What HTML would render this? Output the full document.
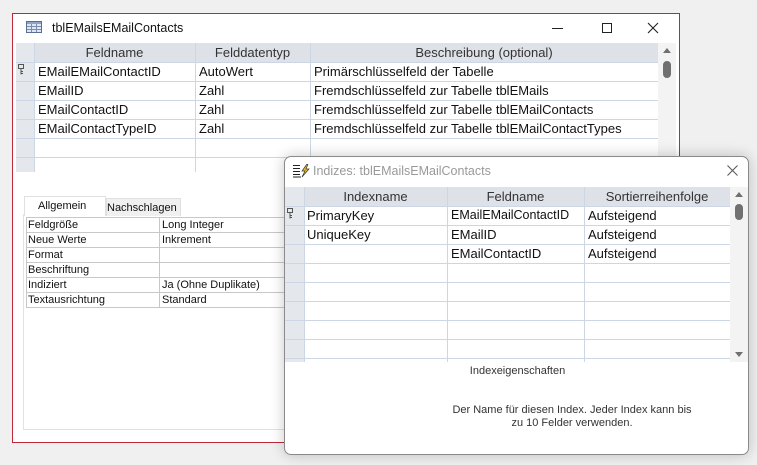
<!DOCTYPE html><html><head><meta charset="utf-8"><style>
*{margin:0;padding:0;box-sizing:border-box}
body{width:757px;height:465px;background:#f0f0f0;position:relative;overflow:hidden;font-family:"Liberation Sans",sans-serif;color:#111}
.a{position:absolute}
.t{position:absolute;white-space:nowrap;font-size:13px;line-height:19px}
.hl{position:absolute;height:1px;background:#cdd6e4}
.vl{position:absolute;width:1px;background:#cdd6e4}
.s{position:absolute;white-space:nowrap;font-size:11px;line-height:15px}
</style></head><body>
<div class="a" style="left:12px;top:13px;width:668px;height:430px;background:#fff;border:1px solid #c0283a"></div>
<svg class="a" style="left:26px;top:21px" width="16" height="12"><rect x="0.5" y="0.5" width="15" height="11" fill="#dfe6f2" stroke="#5a6e94"/><rect x="1" y="1" width="14" height="2" fill="#8ea3c8"/><path d="M1 5.5H15M1 8.5H15M5.5 3V11M10.5 3V11" stroke="#7a8cb0"/></svg>
<div class="t" style="left:52px;top:19px;font-size:12.5px">tblEMailsEMailContacts</div>
<div class="a" style="left:552px;top:28px;width:11px;height:1px;background:#222"></div>
<div class="a" style="left:602px;top:23px;width:10px;height:10px;border:1px solid #222"></div>
<svg class="a" style="left:647px;top:22px" width="12" height="12"><path d="M1 1L11 11M11 1L1 11" stroke="#222" stroke-width="1.1"/></svg>
<div class="a" style="left:16px;top:43px;width:642px;height:19px;background:#dee2e8"></div>
<div class="a" style="left:16px;top:43px;width:18px;height:129px;background:#e4e7ec"></div>
<div class="a" style="left:658px;top:43px;width:18px;height:129px;background:#f3f3f3"></div>
<div class="a" style="left:663px;top:48px;width:0;height:0;border-left:4px solid transparent;border-right:4px solid transparent;border-bottom:5px solid #707070"></div>
<div class="a" style="left:663px;top:61px;width:8px;height:17px;border-radius:4px;background:#707070"></div>
<div class="hl" style="left:16px;top:62px;width:642px"></div>
<div class="hl" style="left:16px;top:81px;width:642px"></div>
<div class="hl" style="left:16px;top:100px;width:642px"></div>
<div class="hl" style="left:16px;top:119px;width:642px"></div>
<div class="hl" style="left:16px;top:138px;width:642px"></div>
<div class="hl" style="left:16px;top:157px;width:642px"></div>
<div class="vl" style="left:34px;top:43px;height:129px"></div>
<div class="vl" style="left:195px;top:43px;height:129px"></div>
<div class="vl" style="left:310px;top:43px;height:129px"></div>
<div class="t" style="left:34px;top:43px;width:161px;text-align:center;color:#333">Feldname</div>
<div class="t" style="left:195px;top:43px;width:115px;text-align:center;color:#333">Felddatentyp</div>
<div class="t" style="left:310px;top:43px;width:348px;text-align:center;color:#333">Beschreibung (optional)</div>
<svg class="a" style="left:18px;top:64px" width="6" height="11"><rect x="0.5" y="0.5" width="5" height="4" fill="none" stroke="#555"/><path d="M3 4.5V10.5M3 7.5H5M3 9.5H5" stroke="#555"/></svg>
<div class="t" style="left:38px;top:62px">EMailEMailContactID</div><div class="t" style="left:199px;top:62px">AutoWert</div><div class="t" style="left:314px;top:62px">Primärschlüsselfeld der Tabelle</div>
<div class="t" style="left:38px;top:81px">EMailID</div><div class="t" style="left:199px;top:81px">Zahl</div><div class="t" style="left:314px;top:81px">Fremdschlüsselfeld zur Tabelle tblEMails</div>
<div class="t" style="left:38px;top:100px">EMailContactID</div><div class="t" style="left:199px;top:100px">Zahl</div><div class="t" style="left:314px;top:100px">Fremdschlüsselfeld zur Tabelle tblEMailContacts</div>
<div class="t" style="left:38px;top:119px">EMailContactTypeID</div><div class="t" style="left:199px;top:119px">Zahl</div><div class="t" style="left:314px;top:119px">Fremdschlüsselfeld zur Tabelle tblEMailContactTypes</div>
<div class="a" style="left:23px;top:214px;width:300px;height:216px;border:1px solid #e2e2e2;border-top:none"></div>
<div class="a" style="left:24px;top:196px;width:82px;height:20px;background:#fff;border:1px solid #e0e0e0;border-bottom:none"></div>
<div class="a" style="left:106px;top:198px;width:75px;height:18px;background:#f0f0f0;border:1px solid #e0e0e0;border-bottom:none"></div>
<div class="s" style="left:38px;top:199px">Allgemein</div>
<div class="s" style="left:107px;top:201px">Nachschlagen</div>
<div class="a" style="left:26px;top:217px;width:270px;height:91px;border:1px solid #c8c8c8;border-right:none"></div>
<div class="a" style="left:159px;top:217px;width:1px;height:91px;background:#c8c8c8"></div>
<div class="a" style="left:26px;top:232px;width:270px;height:1px;background:#c8c8c8"></div>
<div class="a" style="left:26px;top:247px;width:270px;height:1px;background:#c8c8c8"></div>
<div class="a" style="left:26px;top:262px;width:270px;height:1px;background:#c8c8c8"></div>
<div class="a" style="left:26px;top:277px;width:270px;height:1px;background:#c8c8c8"></div>
<div class="a" style="left:26px;top:292px;width:270px;height:1px;background:#c8c8c8"></div>
<div class="s" style="left:28px;top:218px">Feldgröße</div><div class="s" style="left:162px;top:218px">Long Integer</div>
<div class="s" style="left:28px;top:233px">Neue Werte</div><div class="s" style="left:162px;top:233px">Inkrement</div>
<div class="s" style="left:28px;top:248px">Format</div>
<div class="s" style="left:28px;top:263px">Beschriftung</div>
<div class="s" style="left:28px;top:278px">Indiziert</div><div class="s" style="left:162px;top:278px">Ja (Ohne Duplikate)</div>
<div class="s" style="left:28px;top:293px">Textausrichtung</div><div class="s" style="left:162px;top:293px">Standard</div>
<div class="a" style="left:284px;top:156px;width:465px;height:299px;background:#fff;border:1px solid #8a8a8a;border-radius:7px;box-shadow:0 0 14px rgba(0,0,0,0.22)"></div>
<svg class="a" style="left:293px;top:164px" width="18" height="14"><path d="M0 1.5H7M0 4.5H7M0 7.5H7M0 10.5H7M0 13H8" stroke="#222"/><path d="M14 0L9 7H12L9 13L16 5H13L15 0Z" fill="#e8c020" stroke="#333" stroke-width=".7"/></svg>
<div class="t" style="left:313px;top:162px;color:#999;font-size:12.5px">Indizes: tblEMailsEMailContacts</div>
<svg class="a" style="left:727px;top:165px" width="11" height="11"><path d="M.5 .5L10.5 10.5M10.5 .5L.5 10.5" stroke="#555"/></svg>
<div class="a" style="left:285px;top:187px;width:445px;height:19px;background:#dee2e8"></div>
<div class="a" style="left:285px;top:187px;width:19px;height:175px;background:#e4e7ec"></div>
<div class="a" style="left:730px;top:187px;width:18px;height:175px;background:#f3f3f3"></div>
<div class="a" style="left:735px;top:192px;width:0;height:0;border-left:4px solid transparent;border-right:4px solid transparent;border-bottom:5px solid #707070"></div>
<div class="a" style="left:735px;top:204px;width:8px;height:16px;border-radius:4px;background:#707070"></div>
<div class="a" style="left:735px;top:352px;width:0;height:0;border-left:4px solid transparent;border-right:4px solid transparent;border-top:5px solid #707070"></div>
<div class="hl" style="left:285px;top:206px;width:445px"></div>
<div class="hl" style="left:285px;top:225px;width:445px"></div>
<div class="hl" style="left:285px;top:244px;width:445px"></div>
<div class="hl" style="left:285px;top:263px;width:445px"></div>
<div class="hl" style="left:285px;top:282px;width:445px"></div>
<div class="hl" style="left:285px;top:301px;width:445px"></div>
<div class="hl" style="left:285px;top:320px;width:445px"></div>
<div class="hl" style="left:285px;top:339px;width:445px"></div>
<div class="hl" style="left:285px;top:358px;width:445px"></div>
<div class="vl" style="left:304px;top:187px;height:175px"></div>
<div class="vl" style="left:447px;top:187px;height:175px"></div>
<div class="vl" style="left:584px;top:187px;height:175px"></div>
<div class="t" style="left:304px;top:187px;width:143px;text-align:center;color:#333">Indexname</div>
<div class="t" style="left:447px;top:187px;width:137px;text-align:center;color:#333">Feldname</div>
<div class="t" style="left:584px;top:187px;width:146px;text-align:center;color:#333">Sortierreihenfolge</div>
<svg class="a" style="left:287px;top:208px" width="6" height="11"><rect x="0.5" y="0.5" width="5" height="4" fill="none" stroke="#555"/><path d="M3 4.5V10.5M3 7.5H5M3 9.5H5" stroke="#555"/></svg>
<div class="t" style="left:307px;top:206px">PrimaryKey</div><div class="t" style="left:451px;top:206px;font-size:12.5px">EMailEMailContactID</div><div class="t" style="left:588px;top:206px">Aufsteigend</div>
<div class="t" style="left:307px;top:225px">UniqueKey</div><div class="t" style="left:451px;top:225px">EMailID</div><div class="t" style="left:588px;top:225px">Aufsteigend</div>
<div class="t" style="left:451px;top:244px">EMailContactID</div><div class="t" style="left:588px;top:244px">Aufsteigend</div>
<div class="s" style="left:440px;top:364px;width:155px;text-align:center;color:#333">Indexeigenschaften</div>
<div class="s" style="left:442px;top:404px;width:260px;text-align:center;color:#333;line-height:13px;white-space:normal">Der Name für diesen Index. Jeder Index kann bis<br>zu 10 Felder verwenden.</div>
</body></html>
